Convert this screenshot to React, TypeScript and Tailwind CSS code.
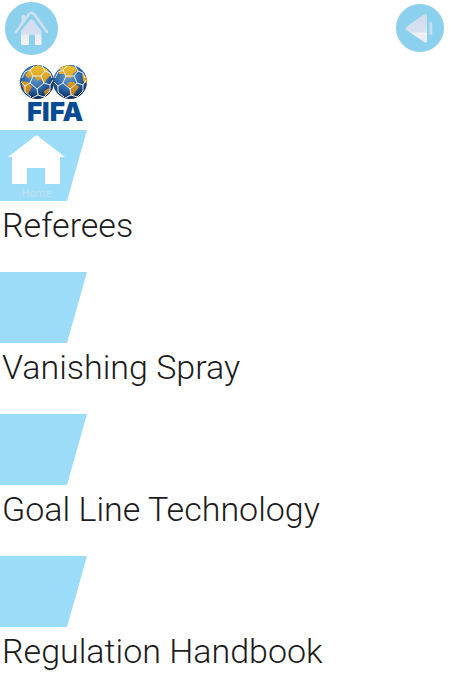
import React from "react";

type Topic = { title: string; home?: boolean };

const topics: Topic[] = [
  { title: "Referees", home: true },
  { title: "Vanishing Spray" },
  { title: "Goal Line Technology" },
  { title: "Regulation Handbook" },
];

function HomeButton() {
  return (
    <button type="button" aria-label="Home" className="rounded-full">
      <svg viewBox="0 0 53 53" className="block size-[53px]">
        <defs>
          <linearGradient id="houseFill" x1="0" y1="0" x2="0" y2="1">
            <stop offset="0" stopColor="#cfdff0" />
            <stop offset="0.58" stopColor="#d6dff0" />
            <stop offset="0.62" stopColor="#ececf3" />
            <stop offset="1" stopColor="#f3f2f5" />
          </linearGradient>
        </defs>
        <circle cx="26.5" cy="26.5" r="26.5" fill="#8bd0ed" />
        <path d="M11 30 L24 12 Q26.500 9.500 29 12 L42 30" fill="none" stroke="#d3e0ef" strokeWidth="2.400" strokeLinecap="round" strokeLinejoin="round" />
        <path d="M16.500 21 V14.500 Q16.500 12.800 18.500 12.800 Q20.500 12.800 20.500 14.500 V17Z" fill="#d3e0ef" />
        <path d="M26.500 17 Q27.500 17 28.500 18.500 L36.500 29 V41.500 Q36.500 43 35 43 H31 Q30 43 30 42 V34 Q30 32.500 28.500 32.500 H25.500 Q24 32.500 24 34 V42 Q24 43 23 43 H17.500 Q16 43 16 41.500 V29 L24.500 18.500 Q25.500 17 26.500 17Z" fill="url(#houseFill)" />
      </svg>
    </button>
  );
}

function SoundButton() {
  return (
    <button type="button" aria-label="Sound" className="rounded-full">
      <svg viewBox="0 0 48 48" className="block size-12">
        <defs>
          <linearGradient id="speakerFill" x1="0" y1="0" x2="0" y2="1">
            <stop offset="0" stopColor="#cfdcee" />
            <stop offset="0.6" stopColor="#d6e0f0" />
            <stop offset="0.68" stopColor="#efeff4" />
            <stop offset="1" stopColor="#e9edf4" />
          </linearGradient>
        </defs>
        <circle cx="24" cy="24" r="24" fill="#8bd0ed" />
        <path d="M10.500 22.500 L28 10.500 Q31 8.800 31 12 V37 Q31 39.800 28 38 L10.500 26 Q8.500 24.200 10.500 22.500Z" fill="url(#speakerFill)" />
        <rect x="33.500" y="18" width="2.800" height="13" rx="1.400" fill="#c5dff0" />
      </svg>
    </button>
  );
}

function BallSeams() {
  return (
    <g fill="none" stroke="#e9eef2" strokeWidth="1" strokeLinejoin="round">
      <path d="M-4 -6 L4 -6 L7 1 L0 7 L-7 1Z" />
      <path d="M-4 -6 L-7 -12 L-3 -16 M4 -6 L8 -11 L5 -16 M7 1 L13 3 L16 -2 M0 7 L1 13 L7 15 M-7 1 L-12 4 L-16 0 M-7 -12 L-12 -10 L-15 -4 M8 -11 L13 -9 L15 -4 M13 3 L13 9 L7 15 M1 13 L-5 16 M-12 4 L-12 10 L-6 15" />
    </g>
  );
}

function FifaLogo() {
  return (
    <div className="flex w-[70px] flex-col items-center">
      <svg viewBox="0 0 70 36" className="block h-9 w-full" aria-hidden="true">
        <defs>
          <radialGradient id="ocean" cx="0.45" cy="0.35" r="0.65">
            <stop offset="0" stopColor="#6d9fce" />
            <stop offset="0.6" stopColor="#2a63a4" />
            <stop offset="1" stopColor="#0c2850" />
          </radialGradient>
          <linearGradient id="land" x1="0" y1="0" x2="0" y2="1">
            <stop offset="0" stopColor="#f0c030" />
            <stop offset="1" stopColor="#bf7c1c" />
          </linearGradient>
          <clipPath id="ball"><circle r="17" /></clipPath>
        </defs>
        <g transform="translate(52 18)">
          <circle r="17" fill="url(#ocean)" />
          <g clipPath="url(#ball)">
            <path d="M-10 -14 L-3 -17 L5 -15 L7 -11 L3 -8 L1 -4 L-3 -4 L-6 -8 L-11 -8Z M-1 0 L4 0 L9 5 L6 9 L3 14 L1 13 L0 7 L-3 3Z M12 -9 L17 -4 L17 2 L13 -1Z" fill="url(#land)" />
            <BallSeams />
          </g>
        </g>
        <g transform="translate(19 18)">
          <circle r="17" fill="url(#ocean)" />
          <g clipPath="url(#ball)">
            <path d="M-6 -14 L1 -17 L10 -13 L14 -7 L10 -3 L7 2 L4 -3 L0 -1 L-3 -6 L-9 -4 L-12 -7Z M-16 -1 L-9 0 L-5 5 L-9 12 L-13 9Z M7 9 L12 6 L13 10 L8 14Z" fill="url(#land)" />
            <BallSeams />
          </g>
        </g>
        <path d="M1 16 Q1 26 9 33" fill="none" stroke="#b9cfe2" strokeWidth="1.500" strokeDasharray="1 1.500" />
      </svg>
      <span className="pl-1 font-['Inter',sans-serif] text-[26px] leading-6 font-black text-[#064b93]">FIFA</span>
    </div>
  );
}

function TopicTile({ home }: { home?: boolean }) {
  return (
    <span className="flex h-[71px] w-[87px] flex-col bg-[#9bddf9] pl-2 [clip-path:polygon(0_0,100%_0,77%_100%,0_100%)]">
      {home && (
        <>
          <svg viewBox="0 0 57 50" className="mt-1 block h-[50px] w-[57px]" aria-hidden="true">
            <path d="M28.500 1 L57 23 H52 V50 H37 V34 H19 V50 H4 V23 H0Z" fill="#fff" />
          </svg>
          <span className="mt-1 w-[57px] text-center font-['DejaVu_Sans',sans-serif] text-[10px] leading-3 text-[#c3ddeb]">Home</span>
        </>
      )}
    </span>
  );
}

export default function App() {
  return (
    <div className="min-h-screen bg-white font-['Roboto',sans-serif] text-[#1c1c1c]">
      <header className="flex items-start justify-between pt-0.5 pr-1.5 pl-[5px]">
        <HomeButton />
        <div className="flex pt-0.5">
          <SoundButton />
        </div>
      </header>
      <div className="flex pt-[9px] pb-1.5 pl-[18px]">
        <FifaLogo />
      </div>
      <nav>
        <ul>
          {topics.map((topic) => (
            <li key={topic.title}>
              <a href="#" className="block">
                <TopicTile home={topic.home} />
                <span className="block h-[71px] pt-0.5 pl-0.5 text-[34px] leading-11 font-light whitespace-nowrap">{topic.title}</span>
              </a>
            </li>
          ))}
        </ul>
      </nav>
    </div>
  );
}
